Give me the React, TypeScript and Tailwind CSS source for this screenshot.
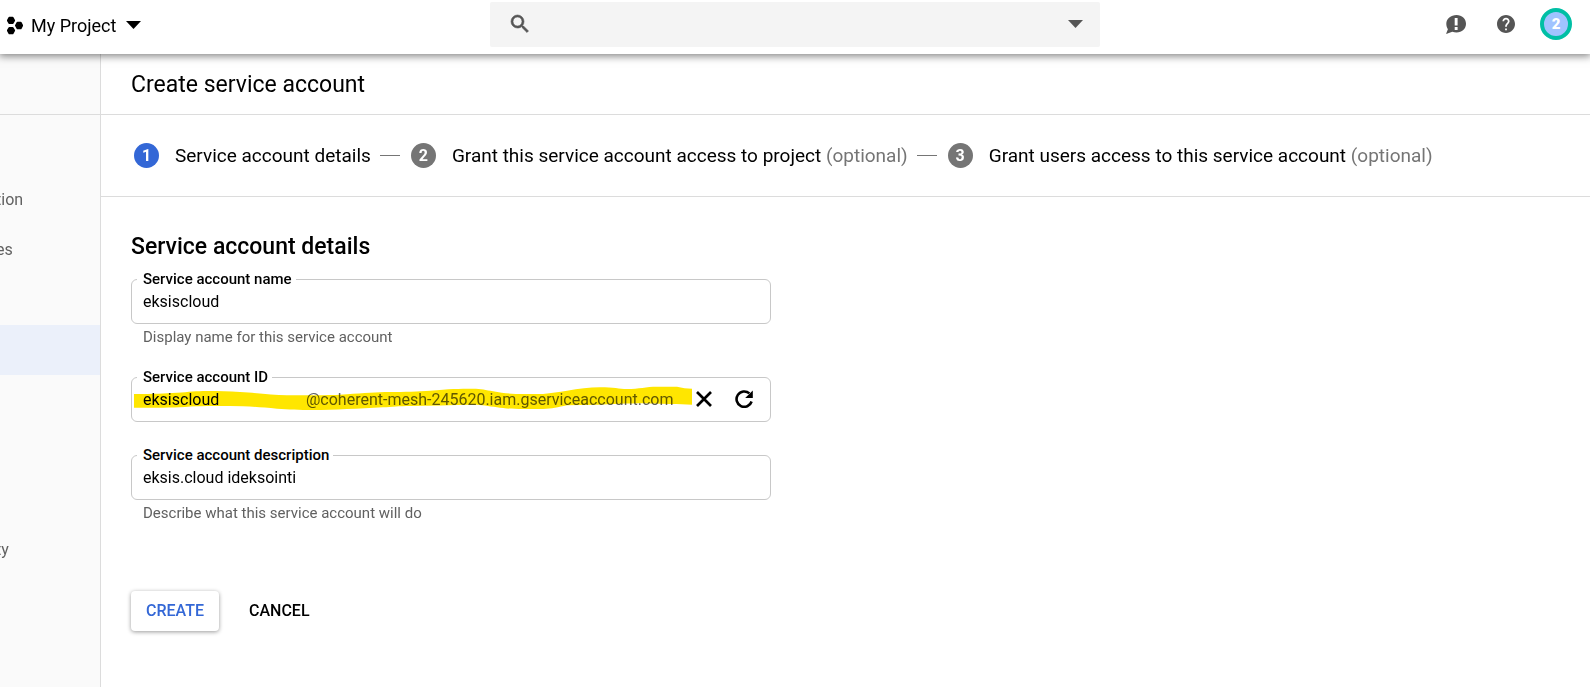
import React, { ReactNode } from "react";

const navItems = ["", "tion", "es", "", "", "", "", "", "ty", "", ""];
const ACTIVE_ITEM = 4;

function ProjectIcon() {
  return (
    <svg viewBox="0 0 16 19" className="h-[19px] w-4" fill="#000" stroke="#000" strokeWidth="2" strokeLinejoin="round">
      <path d="M2.400 1.700h3.200l1.500 2.700-1.500 2.700H2.400L.9 4.400z" />
      <path d="M2.400 11.900h3.200l1.500 2.700-1.500 2.700H2.400L.9 14.600z" />
      <path d="M10.500 6.800h3.200l1.400 2.700-1.400 2.700h-3.200L9 9.500z" />
    </svg>
  );
}

function CaretDown({ className }: { className: string }) {
  return (
    <svg viewBox="0 0 14 8" className={className} fill="currentColor" preserveAspectRatio="none">
      <path d="M0 0h14L7 8z" />
    </svg>
  );
}

function Header() {
  return (
    <header className="relative z-10 flex h-[54px] items-start bg-white shadow-[0_1px_8px_1px_rgba(0,0,0,0.5)]">
      <button type="button" className="mt-[10px] flex h-[30px] w-[490px] shrink items-center pl-[7px] text-[18px] text-black">
        <ProjectIcon />
        <span className="ml-2">My Project</span>
        <CaretDown className="ml-[10px] h-2 w-[15px]" />
      </button>
      <div className="mt-[2px] flex h-[45px] w-[610px] items-center rounded-[2px] bg-[#f4f4f4] pb-[2px] text-[#555]">
        <svg viewBox="0 0 24 24" className="ml-[18px] size-6" fill="currentColor" stroke="currentColor" strokeWidth="0.600">
          <path d="M15.500 14h-.790l-.280-.270A6.470 6.470 0 0 0 16 9.500 6.500 6.500 0 1 0 9.500 16c1.610 0 3.090-.590 4.230-1.570l.270.280v.790l5 4.990L20.490 19l-4.990-5zm-6 0C7.010 14 5 11.990 5 9.500S7.010 5 9.500 5 14 7.010 14 9.500 11.990 14 9.500 14z" />
        </svg>
        <input aria-label="Search" className="h-full min-w-0 flex-1 bg-transparent px-2 outline-none" />
        <button type="button" aria-label="Expand search" className="pr-[17px]">
          <CaretDown className="h-2 w-[15px]" />
        </button>
      </div>
      <div className="mt-2 ml-auto flex items-center pr-[18px] text-[#555]">
        <button type="button" aria-label="Notifications">
          <svg viewBox="0 0 20 19" className="h-[19px] w-5">
            <path fill="currentColor" d="M10.500 0C16 0 20 3.900 20 8.800s-4 8.700-9.500 8.700c-1.500 0-2.900-.2-4.100-.8L0 19l1.900-4.700C.9 12.800.300 10.900.300 8.800.300 3.900 5 0 10.500 0z" />
            <path fill="#fff" d="M8.700 3h2.900v7.500H8.700zM8.700 12h2.900v2.900H8.700z" />
          </svg>
        </button>
        <button type="button" aria-label="Help" className="ml-[31px]">
          <svg viewBox="2 2 20 20" className="size-[18px]" fill="currentColor">
            <path d="M12 2C6.480 2 2 6.480 2 12s4.480 10 10 10 10-4.480 10-10S17.520 2 12 2zm1 17h-2v-2h2v2zm2.070-7.750-.9.920C13.450 12.900 13 13.500 13 15h-2v-.5c0-1.100.45-2.100 1.170-2.830l1.240-1.260c.37-.36.590-.86.590-1.410 0-1.100-.9-2-2-2s-2 .9-2 2H8c0-2.210 1.790-4 4-4s4 1.790 4 4c0 .88-.36 1.680-.93 2.250z" />
          </svg>
        </button>
        <button
          type="button"
          aria-label="Account"
          className="ml-[25px] flex size-8 items-center justify-center rounded-full border-4 border-[#00bfa5] bg-[#a0c3ff] text-[15px] font-black text-white"
        >
          2
        </button>
      </div>
    </header>
  );
}

function Step({ number, active, optional, children }: { number: number; active?: boolean; optional?: boolean; children: ReactNode }) {
  return (
    <li className="flex items-center whitespace-nowrap">
      <span className={`mr-4 flex size-[25px] items-center justify-center rounded-full text-[16px] font-bold text-white ${active ? "bg-[#3367d6]" : "bg-[#757575]"}`}>
        {number}
      </span>
      <span className="pt-[2px]">
        {children}
        {optional && <span className="text-[#757575]"> (optional)</span>}
      </span>
    </li>
  );
}

function StepLine() {
  return <li aria-hidden="true" className="mr-[11px] ml-[9px] h-px w-5 bg-[#757575]" />;
}

function Field({ id, label, help, value, children }: { id: string; label: string; help?: string; value: string; children?: ReactNode }) {
  return (
    <div>
      <div className="relative flex h-[45px] items-center rounded-md border border-[#c8c8c8] bg-white">
        <label htmlFor={id} className="absolute -top-[11px] left-[5px] bg-white pr-1 pl-[6px] text-[15px] leading-5 font-medium">
          {label}
        </label>
        <input id={id} defaultValue={value} className={`h-full min-w-0 bg-transparent pl-[11px] text-[16px] outline-none ${children ? "w-[174px]" : "flex-1"}`} />
        {children}
      </div>
      {help && <p className="mt-[3px] pl-3 text-[15px] leading-5 text-[#616161]">{help}</p>}
    </div>
  );
}

function Highlighter() {
  return (
    <svg viewBox="0 0 560 26" className="pointer-events-none absolute top-[8px] left-[2px] h-[26px] w-[560px] mix-blend-multiply" fill="#ffe600" aria-hidden="true">
      <path d="M0 8C20 8 30 7.500 43 6.700C55 6 62 5 73 5C85 5 95 5.200 106 6C125 7 138 9.300 153 9.300H179C195 9.300 203 9 213 8.300C230 7 243 6 256 6C270 6 285 5.500 296 4.700C315 3 325 2.700 339 2.700C347 2.700 352 4 359 5.300C370 7.500 380 8 389 8H409C418 7 424 6 433 4.700C445 2.500 455 1.300 466 1.300C480 1.300 485 3 493 3C505 3 512 .7 523 .7H543C548 2 553 2.700 558 2.700V18.700C551 18.500 545 18 536 18L509 17.300C495 17.300 478 18.300 463 18.700L433 19.300C424 21 418 23 409 23H389C378 23 370 22.500 363 21.300C354 20 348 18.700 339 18.700C318 18.700 296 20 276 20C265 20 258 21 249 21.300C225 22.500 200 24 179 24C165 24 155 23.500 143 22.700C130 21.500 120 20.500 109 20.300C97 20 85 19.800 73 20C57 20.300 45 21.500 29 21.700H0z" />
    </svg>
  );
}

export default function App() {
  return (
    <div className="flex min-h-screen flex-col bg-white font-[Roboto,sans-serif] text-black">
      <Header />
      <div className="flex flex-1">
        <aside className="w-[101px] shrink-0 overflow-hidden border-r border-[#dcdcdc] bg-[#fafafa]">
          <div className="h-[61px] border-b border-[#dcdcdc]" />
          <nav className="pt-[10px] text-[16px] text-[#616161]">
            {navItems.map((item, i) => (
              <a key={i} href="#" className={`flex h-[50px] items-center ${i === ACTIVE_ITEM ? "bg-[#ebf0fa]" : ""}`}>
                <span className="-ml-1">{item}</span>
              </a>
            ))}
          </nav>
        </aside>
        <main className="min-w-0 flex-1">
          <h1 className="flex h-[61px] items-center border-b border-[#dcdcdc] pt-[2px] pl-[30px] text-[23px]">Create service account</h1>
          <ol className="flex h-[82px] items-center border-b border-[#dcdcdc] pl-[33px] text-[19px]">
            <Step number={1} active>Service account details</Step>
            <StepLine />
            <Step number={2} optional>Grant this service account access to project</Step>
            <StepLine />
            <Step number={3} optional>Grant users access to this service account</Step>
          </ol>
          <form className="max-w-[670px] pt-[34px] pl-[30px]" onSubmit={(e) => e.preventDefault()}>
            <h2 className="text-[23px] leading-8 font-medium">Service account details</h2>
            <div className="mt-4 flex flex-col">
              <Field id="name" label="Service account name" value="eksiscloud" help="Display name for this service account" />
              <div className="mt-[30px] mb-[33px]">
                <Field id="account-id" label="Service account ID" value="eksiscloud">
                  <span className="text-[16px] text-[#616161]">@coherent-mesh-245620.iam.gserviceaccount.com</span>
                  <Highlighter />
                  <span className="mr-[17px] mb-px ml-auto flex items-center gap-[23px]">
                    <button type="button" aria-label="Clear">
                      <svg viewBox="0 0 16 16" className="size-4" fill="none" stroke="#000" strokeWidth="2.700">
                        <path d="M1 1l14 14M15 1L1 15" />
                      </svg>
                    </button>
                    <button type="button" aria-label="Refresh">
                      <svg viewBox="0 0 18 18" className="size-[18px]">
                        <path d="M16.600 11.500A7.700 7.700 0 1 1 14.400 3.400" fill="none" stroke="#000" strokeWidth="2.600" />
                        <path d="M17.800.4V8h-7.600z" />
                      </svg>
                    </button>
                  </span>
                </Field>
              </div>
              <Field id="description" label="Service account description" value="eksis.cloud ideksointi" help="Describe what this service account will do" />
            </div>
            <div className="mt-[68px] flex gap-[15px] text-[16px] font-medium">
              <button type="submit" className="h-10 rounded px-[15px] text-[#3367d6] shadow-[0_1px_4px_rgba(0,0,0,0.4)]">CREATE</button>
              <button type="button" className="h-10 px-[15px]">CANCEL</button>
            </div>
          </form>
        </main>
      </div>
    </div>
  );
}
